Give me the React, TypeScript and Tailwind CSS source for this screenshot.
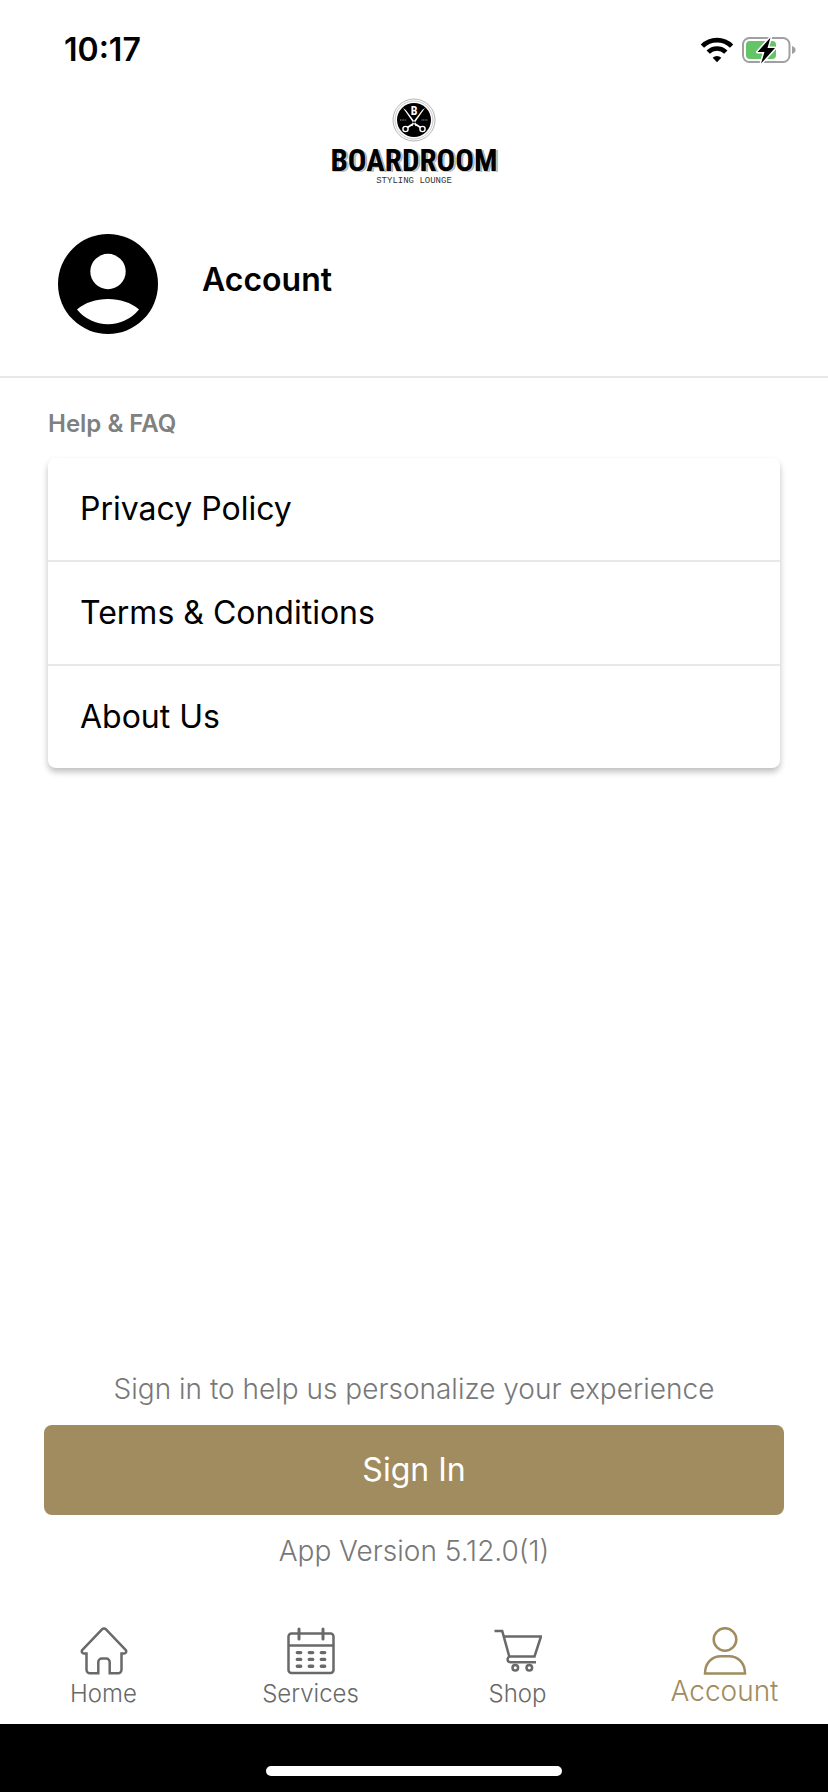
import React from 'react';
import clsx from 'clsx';

const links = ['Privacy Policy', 'Terms & Conditions', 'About Us'];

function StatusIcons() {
  return (
    <div className="flex items-center gap-2">
      <svg width="34" height="26" viewBox="0 0 34 26" fill="none" stroke="black" strokeWidth="4.6" aria-hidden="true">
        <path d="M2.4 9.2a20.5 20.5 0 0 1 29.2 0" />
        <path d="M8.2 15.2a12.4 12.4 0 0 1 17.6 0" />
        <path d="M17 25.2l-4.3-4.5a6.2 6.2 0 0 1 8.6 0z" fill="black" stroke="none" />
      </svg>
      <svg width="54" height="28" viewBox="0 0 54 28" aria-hidden="true">
        <rect x="1" y="2" width="46.5" height="24" rx="6.5" fill="none" stroke="#a0a0a0" strokeWidth="2" />
        <path d="M50 10c2.4.8 3.6 2.2 3.6 4s-1.2 3.2-3.6 4z" fill="#a0a0a0" />
        <rect x="4" y="5" width="30" height="18" rx="4" fill="#65c466" />
        <path d="M28.5 1.5L15.5 16h7l-3.5 11.5L33 12h-7.5z" fill="black" stroke="white" strokeWidth="3" strokeLinejoin="round" paintOrder="stroke" />
      </svg>
    </div>
  );
}

function Logo() {
  return (
    <div className="flex flex-col items-center">
      <svg width="44" height="44" viewBox="0 0 44 44" fill="none" aria-hidden="true">
        <circle cx="22" cy="22" r="21" stroke="#b5b5b5" strokeWidth="1" />
        <circle cx="22" cy="22" r="19" stroke="#c8c8c8" strokeWidth="1" />
        <circle cx="22" cy="22" r="17" fill="black" />
        <text x="22" y="17" textAnchor="middle" fill="white" className="font-['Roboto_Condensed','Roboto',sans-serif] text-[12px] font-bold">B</text>
        <path d="M11 10l2.8 2L25.5 27.5l-1.8.8zM33 10l-2.8 2L18.5 27.5l1.8.8z" fill="white" />
        <path d="M8 22h6.5M29.5 22H36" stroke="#666" strokeWidth="1.5" strokeDasharray="1 .6" />
        <path d="M24 26.5l4.5 3M20 26.5l-4.5 3" stroke="white" strokeWidth="1.8" />
        <circle cx="13.5" cy="31" r="2.6" stroke="white" strokeWidth="1.4" />
        <circle cx="30.5" cy="31" r="2.6" stroke="white" strokeWidth="1.4" />
      </svg>
      <span className="mt-[5px] font-['Roboto_Condensed','Roboto',sans-serif] text-[31px] leading-7 font-bold text-black [text-shadow:1px_1px_0_#ccc,2px_1px_0_#aaa]">BOARDROOM</span>
      <span className="font-['Liberation_Mono',monospace] text-[9px] leading-3 text-[#333]">STYLING LOUNGE</span>
    </div>
  );
}

function HomeIcon() {
  return (
    <path d="M18.3 46.3H10a3.5 3.5 0 0 1-3.5-3.5V26.5H4a2.2 2.2 0 0 1-1.6-3.7L22 2.3a2.8 2.8 0 0 1 4 0l19.6 20.5a2.2 2.2 0 0 1-1.6 3.7h-2.5v16.3a3.5 3.5 0 0 1-3.5 3.5h-8.3V35a3.5 3.5 0 0 0-3.5-3.5h-4.4a3.5 3.5 0 0 0-3.5 3.5z" />
  );
}

function ServicesIcon() {
  return (
    <>
      <rect x="1.5" y="6.5" width="45" height="39.5" rx="3" />
      <path d="M1.5 18.5h45" />
      <path d="M12 2v10M36 2v10" strokeWidth="3" strokeLinecap="round" />
      <path d="M10.3 25.6h3.4M22.3 25.6h3.4M34.3 25.6h3.4M10.3 32.4h3.4M22.3 32.4h3.4M34.3 32.4h3.4M10.3 39.2h3.4M22.3 39.2h3.4M34.3 39.2h3.4" strokeWidth="3.4" strokeLinecap="round" />
    </>
  );
}

function ShopIcon() {
  return (
    <>
      <path d="M.5 4h7.7l7.1 25.5h25.2L47 9.5H9.7" />
      <path d="M15.3 29.5c-2.5 1.500-2.300 5.700 1.200 5.700H42" />
      <circle cx="21.3" cy="40.7" r="2.8" />
      <circle cx="35.3" cy="40.7" r="2.8" />
    </>
  );
}

function PersonIcon() {
  return (
    <>
      <circle cx="24" cy="12.5" r="11.3" />
      <path d="M4 46.4C4 36 11 29.2 20 29.2h8c9 0 16 6.8 16 17.2z" />
    </>
  );
}

const tabs = [
  { label: 'Home', icon: HomeIcon },
  { label: 'Services', icon: ServicesIcon },
  { label: 'Shop', icon: ShopIcon },
  { label: 'Account', icon: PersonIcon, active: true },
];

export default function App() {
  return (
    <div className="flex min-h-screen flex-col bg-white font-['Inter',sans-serif] text-black">
      <header className="border-b-2 border-[#e8e8e8] pb-[42px]">
        <div className="flex items-center justify-between pt-[30px] pr-8 pl-16">
          <span className="text-[32px] leading-10 font-semibold">10:17</span>
          <StatusIcons />
        </div>
        <div className="pt-7">
          <Logo />
        </div>
        <div className="flex items-center gap-11 px-[58px] pt-[47px]">
          <svg width="100" height="100" viewBox="0 0 100 100" aria-hidden="true">
            <circle cx="50" cy="50" r="50" fill="black" />
            <circle cx="50" cy="37.5" r="17.7" fill="white" />
            <path d="M19 75.5C27 68.5 38 65 50 65s23 3.5 31 10.5a40 40 0 0 1-62 0z" fill="white" />
          </svg>
          <h1 className="pb-2 text-[32px] leading-10 font-semibold">Account</h1>
        </div>
      </header>

      <main className="flex grow flex-col px-11">
        <section className="px-1 pt-7">
          <h2 className="text-[24px] leading-9 font-semibold text-[#808080]">Help &amp; FAQ</h2>
          <ul className="mt-4 divide-y-2 divide-[#e8e8e8] rounded-lg bg-white shadow-[0_4px_6px_rgba(0,0,0,0.25)]">
            {links.map((link) => (
              <li key={link}>
                <a href="#" className="flex h-[102px] items-center px-8 text-[32px] leading-10">{link}</a>
              </li>
            ))}
          </ul>
        </section>

        <section className="mt-auto pb-[51px] text-center text-[28px] leading-10 font-light text-[#787878]">
          <p>Sign in to help us personalize your experience</p>
          <button type="button" className="mt-4 mb-4 block h-[90px] w-full rounded-lg bg-[#a08c5f] text-[32px] font-normal text-white">Sign In</button>
          <p>App Version 5.12.0(1)</p>
        </section>
      </main>

      <nav className="grid h-[102px] grid-cols-4 pt-[5px]">
        {tabs.map(({ label, icon: Icon, active }) => (
          <a key={label} href="#" className={clsx('flex flex-col items-center', active ? 'text-[#a08c5f]' : 'text-[#696969]')}>
            <svg width="48" height="48" viewBox="0 0 48 48" fill="none" stroke="currentColor" strokeWidth="2.5" aria-hidden="true">
              <Icon />
            </svg>
            <span className={clsx('font-light', active ? 'text-[28px] leading-8' : 'text-[24px] leading-[38px]')}>{label}</span>
          </a>
        ))}
      </nav>
      <footer className="flex h-[68px] items-end justify-center bg-black pb-4">
        <div className="h-[10px] w-[296px] rounded-full bg-white" />
      </footer>
    </div>
  );
}
